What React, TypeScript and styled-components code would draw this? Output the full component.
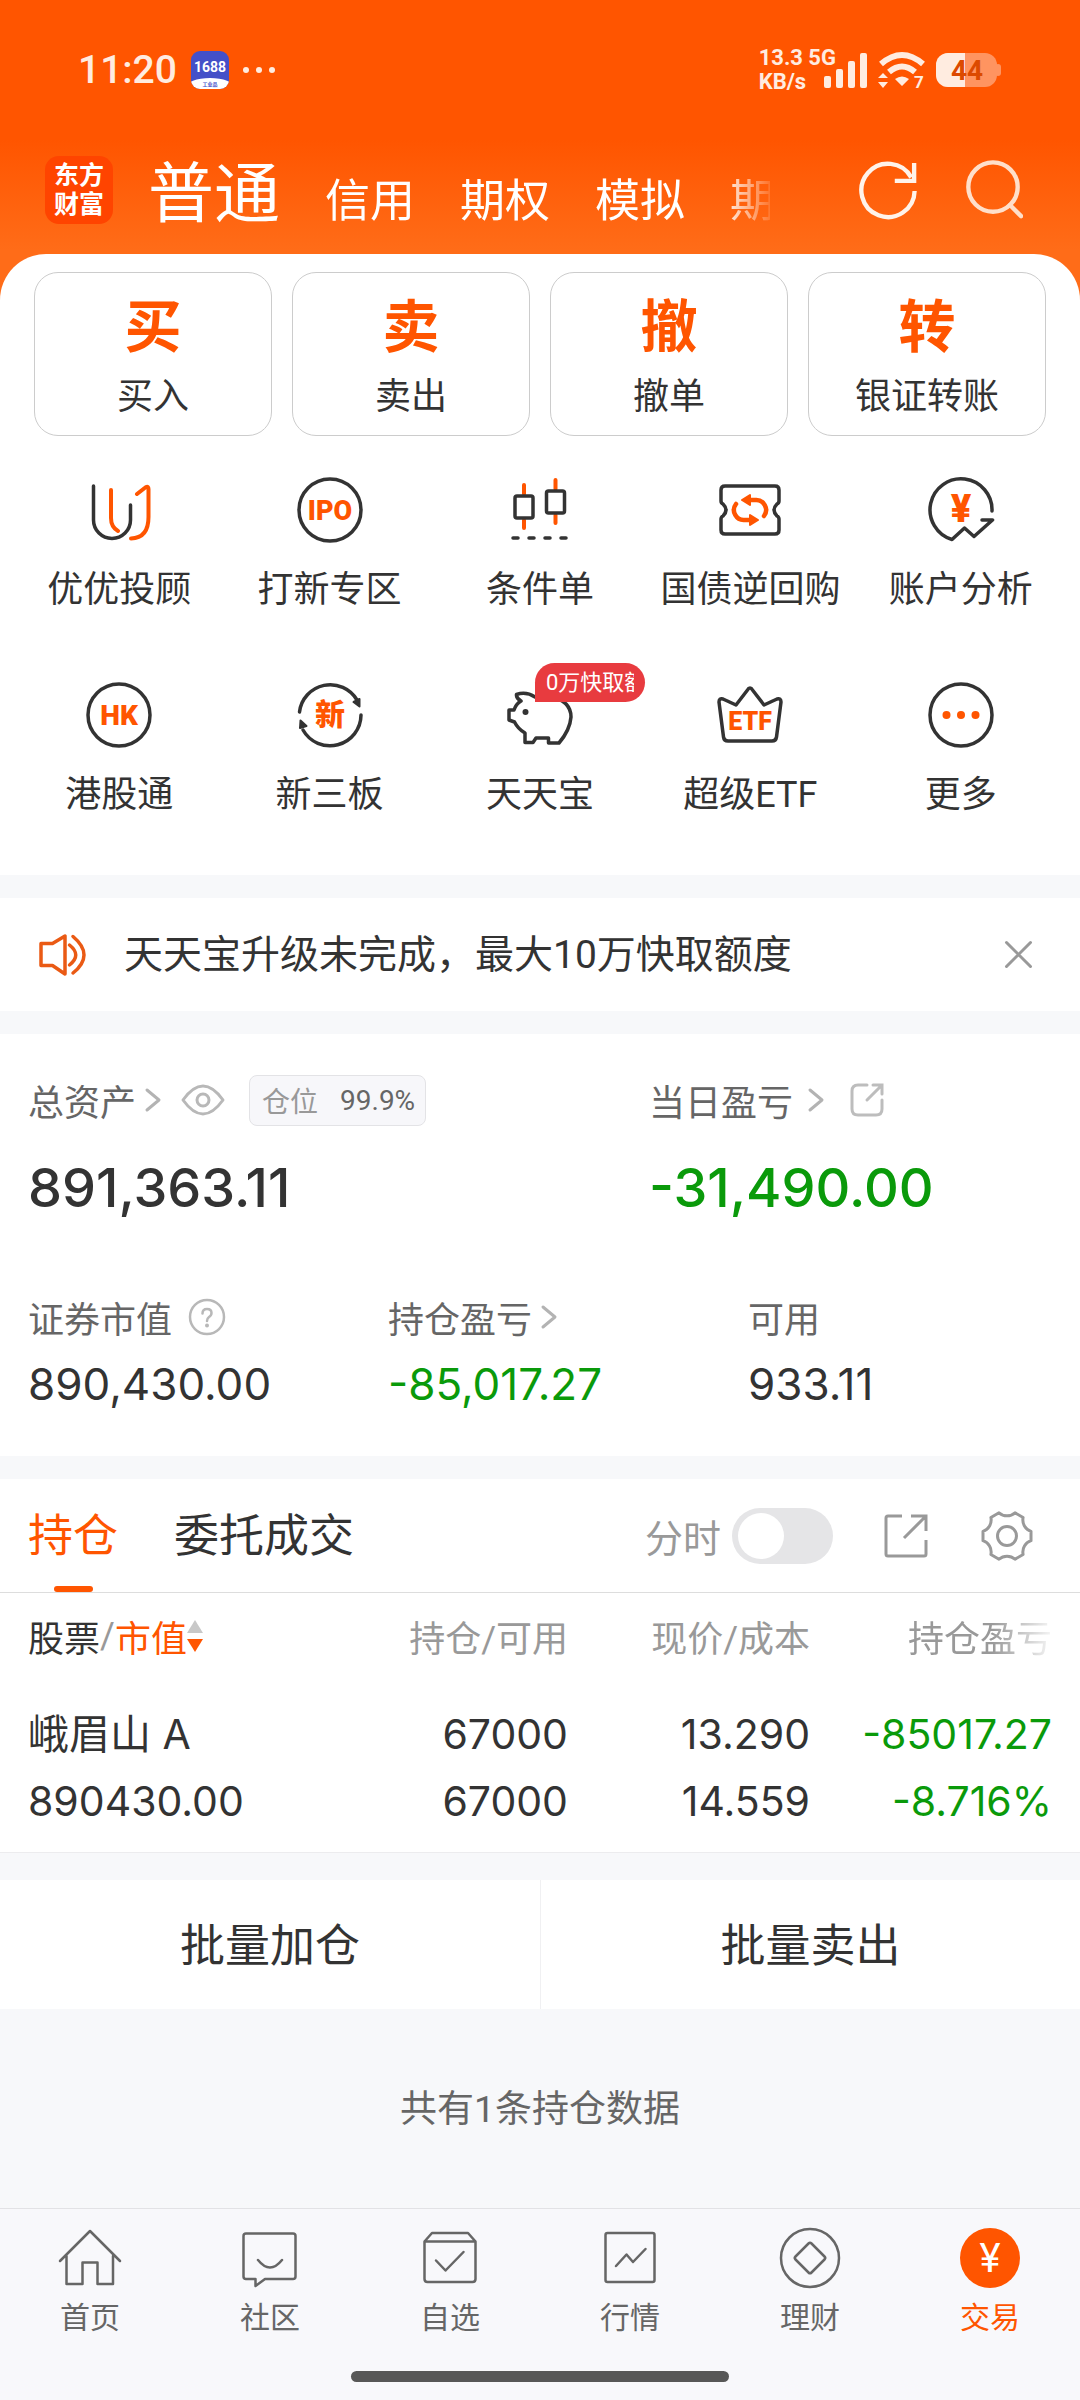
import React, { useState } from "react";
import styled, { createGlobalStyle } from "styled-components";

const ORANGE = "#ff5500";
const INK = "#333333";
const GREY = "#666666";
const LIGHT = "#999999";
const GREEN = "#0a9a0a";
const SANS = `Roboto, "Noto Sans CJK SC", sans-serif`;
const FIGURES = `Inter, "Noto Sans CJK SC", sans-serif`;

const GlobalStyle = createGlobalStyle`
  * { box-sizing: border-box; }
  body { margin: 0; background: #f7f8fa; font-family: ${SANS}; color: ${INK}; }
  button { font: inherit; color: inherit; background: none; border: 0; padding: 0; margin: 0; cursor: pointer; }
  a { color: inherit; text-decoration: none; }
  svg { display: block; flex: none; }
  h1, h2, p { margin: 0; font-weight: 400; }
`;

const Page = styled.div`
  display: flex;
  flex-direction: column;
  min-height: 100vh;
`;

/* ---------- header ---------- */

const Header = styled.header`
  padding-bottom: 60px;
  background: linear-gradient(#ff5500 0, #ff5500 140px, #ff6c18 250px, #ff6c18 100%);
  color: #fff;
`;

const StatusBar = styled.div`
  display: flex;
  align-items: center;
  height: 140px;
  padding: 0 78px;
  color: #ffece0;
`;

const Clock = styled.time`
  font: 500 39px/48px ${SANS};
`;

const StatusIcons = styled.div`
  display: flex;
  align-items: center;
  gap: 12px;
  margin-left: 14px;
`;

const StatusRight = styled.div`
  display: flex;
  align-items: center;
  gap: 10px;
  margin-left: auto;
`;

const NetSpeed = styled.div`
  font: 700 22px/24px ${SANS};
  margin-right: -22px;
  white-space: pre;
`;

const TopNav = styled.nav`
  display: flex;
  align-items: center;
  height: 100px;
  padding: 0 57px 0 45px;
`;

const Logo = styled.div`
  display: grid;
  place-content: center;
  width: 68px;
  height: 68px;
  border-radius: 14px;
  background: #ff4400;
  font: 700 25px/29px ${SANS};
  text-align: center;
`;

const AccountTabs = styled.div`
  display: flex;
  flex: 1;
  align-items: baseline;
  gap: 45px;
  margin: 0 88px 0 35px;
  padding-top: 16px;
  overflow: hidden;
  white-space: nowrap;
  mask-image: linear-gradient(to right, #000 calc(100% - 50px), transparent calc(100% + 8px));
`;

const AccountTab = styled.button<{ $active?: boolean }>`
  flex: none;
  font-size: ${(p) => (p.$active ? 66 : 45)}px;
  line-height: 90px;
`;

const TopActions = styled.div`
  display: flex;
  gap: 45px;
`;

/* ---------- shortcuts ---------- */

const Shortcuts = styled.section`
  margin-top: -46px;
  padding: 18px 0 58px;
  border-radius: 46px 46px 0 0;
  background: #fff;
`;

const TradeRow = styled.div`
  display: grid;
  grid-template-columns: repeat(4, 1fr);
  gap: 20px;
  padding: 0 34px;
`;

const TradeCard = styled.button`
  display: flex;
  flex-direction: column;
  align-items: center;
  gap: 8px;
  padding: 18px 0 14px;
  border: 1px solid #cccccc;
  border-radius: 24px;
  font-size: 36px;
  line-height: 48px;
`;

const TradeMark = styled.span`
  color: ${ORANGE};
  font-size: 57px;
  font-weight: 700;
  line-height: 74px;
`;

const ToolGrid = styled.div`
  display: grid;
  grid-template-columns: repeat(5, 1fr);
  row-gap: 67px;
  margin-top: 38px;
  padding: 0 14px;
`;

const Tool = styled.button`
  position: relative;
  display: flex;
  flex-direction: column;
  align-items: center;
  gap: 22px;
  font-size: 36px;
  line-height: 44px;
  white-space: nowrap;
`;

const Badge = styled.span`
  position: absolute;
  top: -16px;
  left: 50%;
  width: 110px;
  height: 39px;
  margin-left: -5px;
  padding: 0 11px;
  border-radius: 20px 20px 20px 0;
  background: #e83b3f;
  color: #fff;
  font-size: 22px;
  line-height: 39px;
  text-align: left;
`;

const BadgeText = styled.span`
  display: block;
  overflow: hidden;
`;

/* ---------- notice ---------- */

const Notice = styled.section`
  display: flex;
  align-items: center;
  height: 113px;
  margin-top: 23px;
  padding: 0 47px 0 38px;
  background: #fff;
`;

const NoticeText = styled.p`
  flex: 1;
  margin-left: 36px;
  font-size: 39px;
  line-height: 48px;
`;

/* ---------- assets ---------- */

const Assets = styled.section`
  margin-top: 23px;
  padding: 36px 0 37px;
  background: #fff;
`;

const AssetRow = styled.div<{ $cols: string }>`
  display: grid;
  grid-template-columns: ${(p) => p.$cols};
  & + & { margin-top: 67px; }
`;

const Asset = styled.div`
  padding-left: 28px;
`;

const AssetLabel = styled.div<{ $tall?: boolean }>`
  display: flex;
  align-items: center;
  height: ${(p) => (p.$tall ? 60 : 48)}px;
  color: ${GREY};
  font-size: 36px;
`;

const LabelLink = styled.a<{ $gap: number }>`
  display: flex;
  align-items: center;
  gap: ${(p) => p.$gap}px;
`;

const IconButton = styled.button<{ $ml?: number }>`
  margin-left: ${(p) => p.$ml ?? 0}px;
`;

const Chip = styled.span`
  display: flex;
  align-items: center;
  gap: 22px;
  height: 51px;
  margin-left: 24px;
  padding: 0 10px 0 12px;
  border: 1px solid #e3e3e6;
  border-radius: 8px;
  background: #f7f7fa;
  color: ${LIGHT};
  font-size: 28px;
  b { color: ${GREY}; font-weight: 400; }
`;

const Amount = styled.div<{ $big?: boolean; $down?: boolean }>`
  margin-top: ${(p) => (p.$big ? 20 : 8)}px;
  color: ${(p) => (p.$down ? GREEN : INK)};
  font-family: ${FIGURES};
  font-size: ${(p) => (p.$big ? 54 : 44)}px;
  font-weight: ${(p) => (p.$big ? 500 : 400)};
  line-height: ${(p) => (p.$big ? 76 : 70)}px;
`;

/* ---------- holdings ---------- */

const Holdings = styled.section`
  margin-top: 23px;
  border-bottom: 1px solid #ececee;
  background: #fff;
`;

const HoldingsBar = styled.div`
  display: flex;
  align-items: center;
  height: 114px;
  padding: 0 47px 0 28px;
  border-bottom: 1px solid #dddddd;
`;

const HoldingsTab = styled.button<{ $active?: boolean }>`
  display: flex;
  flex-direction: column;
  align-items: center;
  height: 113px;
  margin-right: 56px;
  color: ${(p) => (p.$active ? ORANGE : INK)};
  font-size: 45px;
  line-height: 115px;
  &::after {
    content: "";
    width: 39px;
    height: 6px;
    margin-top: -8px;
    border-radius: 3px;
    background: ${(p) => (p.$active ? ORANGE : "transparent")};
  }
`;

const ChartSwitch = styled.label`
  display: flex;
  align-items: center;
  gap: 11px;
  margin-left: auto;
  color: ${LIGHT};
  font-size: 38px;
`;

const Switch = styled.input`
  appearance: none;
  display: flex;
  width: 101px;
  height: 56px;
  margin: 0;
  padding: 5px 6px;
  border-radius: 28px;
  background: #e5e5e7;
  cursor: pointer;
  &::before {
    content: "";
    width: 46px;
    height: 46px;
    border-radius: 50%;
    background: #fff;
  }
  &:checked { justify-content: flex-end; background: ${ORANGE}; }
`;

const TableWrap = styled.div`
  padding: 0 28px;
`;

const Table = styled.table`
  width: 100%;
  border-collapse: collapse;
  table-layout: fixed;
`;

const Th = styled.th<{ $fade?: boolean }>`
  width: 242px;
  height: 86px;
  padding: 0;
  color: ${LIGHT};
  font-size: 36px;
  font-weight: 400;
  text-align: right;
  white-space: nowrap;
  &:first-child { width: auto; text-align: left; }
  ${(p) => p.$fade && "mask-image: linear-gradient(to right, #000 calc(100% - 60px), transparent calc(100% + 6px));"}
`;

const SortButton = styled.button`
  display: flex;
  align-items: center;
  color: ${LIGHT};
  span { color: ${INK}; }
  em { color: ${ORANGE}; font-style: normal; }
`;

const Td = styled.td<{ $down?: boolean }>`
  padding: 22px 0 17px;
  color: ${(p) => (p.$down ? GREEN : INK)};
  font-family: ${FIGURES};
  font-size: 41px;
  line-height: 67px;
  text-align: right;
  white-space: nowrap;
  &:first-child { text-align: left; }
`;

const Line = styled.div`
  height: 67px;
`;

const BatchRow = styled.div`
  display: grid;
  grid-template-columns: 1fr 1fr;
  margin-top: 27px;
  background: #fff;
`;

const BatchButton = styled.button`
  height: 129px;
  padding-bottom: 4px;
  font-size: 45px;
  & + & { border-left: 1px solid #f0f0f2; }
`;

const CountNote = styled.p`
  display: flex;
  flex: 1;
  align-items: center;
  justify-content: center;
  min-height: 120px;
  padding-bottom: 6px;
  color: ${GREY};
  font-size: 37px;
`;

/* ---------- bottom bar ---------- */

const BottomBar = styled.footer`
  border-top: 1px solid #e2e2e5;
  background: #f8f8fb;
`;

const BottomNav = styled.nav`
  display: grid;
  grid-template-columns: repeat(6, 1fr);
  padding-top: 17px;
`;

const NavItem = styled.a<{ $active?: boolean }>`
  display: flex;
  flex-direction: column;
  align-items: center;
  gap: 10px;
  color: ${(p) => (p.$active ? ORANGE : GREY)};
  font-size: 30px;
  line-height: 36px;
`;

const HomeBar = styled.div`
  width: 35%;
  height: 11px;
  margin: 35px auto 18px;
  border-radius: 6px;
  background: #575757;
`;

/* ---------- icons ---------- */

const Chevron = () => (
  <svg width="18" height="26" viewBox="0 0 18 26" fill="none" stroke="#b3b3b3" strokeWidth="3" strokeLinecap="round" strokeLinejoin="round">
    <path d="M3 3 15 13 3 23" />
  </svg>
);

const ToolIcon = ({ children }: { children: React.ReactNode }) => (
  <svg width="72" height="72" viewBox="0 0 72 72" fill="none" stroke={INK} strokeWidth="3.500" strokeLinecap="round" strokeLinejoin="round" aria-hidden="true">
    {children}
  </svg>
);

const IconWord = ({ size, y = 46, children }: { size: number; y?: number; children: string }) => (
  <text x="36" y={y} textAnchor="middle" fontFamily={SANS} fontWeight="900" fontSize={size} fill={ORANGE} stroke="none">
    {children}
  </text>
);

const advisorIcon = (
  <ToolIcon>
    <path d="M10.500 12V46A18.500 18.500 0 0 0 47.500 46V31" />
    <path stroke={ORANGE} strokeWidth="4" d="M28 16V44Q28 53 35 57M54 20 63 13Q65.500 12 65.500 15V43Q65.500 64 48 64.500" />
  </ToolIcon>
);
const ipoIcon = (
  <ToolIcon>
    <circle cx="36" cy="36" r="31" />
    <IconWord size={27}>IPO</IconWord>
  </ToolIcon>
);
const conditionIcon = (
  <ToolIcon>
    <path stroke={ORANGE} strokeWidth="4" d="M20 11V20M20 46V54M51.500 6V15M51.500 41V49" />
    <rect x="11" y="22" width="18" height="22" rx="2" />
    <rect x="42.500" y="17" width="18" height="22" rx="2" />
    <path d="M9 64H14M25 64H30M41 64H46M57 64H62" />
  </ToolIcon>
);
const repoIcon = (
  <ToolIcon>
    <path d="M11 12H61Q65 12 65 16V27Q65 29 63 30Q57 36 63 42Q65 43 65 45V56Q65 60 61 60H11Q7 60 7 56V45Q7 43 9 42Q15 36 9 30Q7 29 7 27V16Q7 12 11 12Z" />
    <g stroke={ORANGE} strokeWidth="4.500">
      <path d="M36 26H41A10 10 0 0 1 50 42M36 46H31A10 10 0 0 1 22 30" />
      <path fill={ORANGE} strokeWidth="2" d="M28 26 36 21V31ZM44 46 36 41V51Z" />
    </g>
  </ToolIcon>
);
const analysisIcon = (
  <ToolIcon>
    <path d="M67 37A31 31 0 1 0 27 65.500L39.500 54 49 62.500 67.500 46H57" />
    <IconWord size={38} y={48}>¥</IconWord>
  </ToolIcon>
);
const hkIcon = (
  <ToolIcon>
    <circle cx="36" cy="36" r="31" />
    <IconWord size={28}>HK</IconWord>
  </ToolIcon>
);
const neeqIcon = (
  <ToolIcon>
    <path d="M5.500 33A31 31 0 0 1 63 21M67 36A31 31 0 0 1 9 51" />
    <path fill={INK} strokeWidth="2" d="M65.500 27.500 59.500 23 65.500 20ZM6.500 41.500 6 49 12.500 47Z" />
    <IconWord size={30}>新</IconWord>
  </ToolIcon>
);
const piggyIcon = (
  <ToolIcon>
    <path d="M12.500 15.500Q22 12 31 18Q37 15 46 17Q67 22 67 38Q66 51 55 64H44.500V59H32L29 63.500H21V54Q14 50 10.500 43L5 41V31H10Q12 25 17 22Q12 19 12.500 15.500Z" />
    <circle cx="21.500" cy="33" r="3" fill={INK} stroke="none" />
  </ToolIcon>
);
const etfIcon = (
  <ToolIcon>
    <path d="M36 9Q37.500 9 38.500 11L50 26 63 20Q67 19 67 23L62.500 58Q62 62 58 62H14Q10 62 9.500 58L5 23Q5 19 9 20L22 26 33.500 11Q34.500 9 36 9Z" />
    <IconWord size={25} y={51}>ETF</IconWord>
  </ToolIcon>
);
const moreIcon = (
  <ToolIcon>
    <circle cx="36" cy="36" r="31" />
    <g fill={ORANGE} stroke="none">
      <circle cx="21.500" cy="36" r="4" />
      <circle cx="36" cy="36" r="4" />
      <circle cx="50.500" cy="36" r="4" />
    </g>
  </ToolIcon>
);

const NavIcon = ({ children }: { children: React.ReactNode }) => (
  <svg width="64" height="64" viewBox="0 0 64 64" fill="none" stroke="currentColor" strokeWidth="2.500" strokeLinecap="round" strokeLinejoin="round" aria-hidden="true">
    {children}
  </svg>
);

/* ---------- data ---------- */

const trades = [
  ["买", "买入"],
  ["卖", "卖出"],
  ["撤", "撤单"],
  ["转", "银证转账"],
];

const tools: { name: string; icon: React.ReactNode; badge?: string }[] = [
  { name: "优优投顾", icon: advisorIcon },
  { name: "打新专区", icon: ipoIcon },
  { name: "条件单", icon: conditionIcon },
  { name: "国债逆回购", icon: repoIcon },
  { name: "账户分析", icon: analysisIcon },
  { name: "港股通", icon: hkIcon },
  { name: "新三板", icon: neeqIcon },
  { name: "天天宝", icon: piggyIcon, badge: "0万快取额" },
  { name: "超级ETF", icon: etfIcon },
  { name: "更多", icon: moreIcon },
];

const navItems = [
  { name: "首页", icon: <NavIcon><path d="M2 35 32 5 62 35M8.500 30V58H24.500V36.500H39.500V58H55V30" /></NavIcon> },
  { name: "社区", icon: <NavIcon><path d="M8 7.500H55Q57.500 7.500 57.500 10V50.500Q57.500 53 55 53H27L17.500 60V53H8Q5.500 53 5.500 50.500V10Q5.500 7.500 8 7.500ZM20 34Q32 49 44 34" /></NavIcon> },
  { name: "自选", icon: <NavIcon><path d="M6.500 15.500 14 7H50L57.500 15.500V53Q57.500 56 54.500 56H9.500Q6.500 56 6.500 53ZM6.500 15.500H57.500M18 34.500 27.500 44.500 45.500 26" /></NavIcon> },
  { name: "行情", icon: <NavIcon><rect x="7.500" y="7" width="49" height="49" rx="2" /><path d="M18 40 28.500 28.500 35 36 47.500 23" /></NavIcon> },
  { name: "理财", icon: <NavIcon><circle cx="32" cy="32" r="29" /><path d="M30.500 17.500Q32 16 33.500 17.500L46.500 30.500Q48 32 46.500 33.500L33.500 46.500Q32 48 30.500 46.500L17.500 33.500Q16 32 17.500 30.500Z" /></NavIcon> },
  {
    name: "交易",
    icon: (
      <NavIcon>
        <circle cx="32" cy="32" r="30" fill={ORANGE} stroke="none" />
        <text x="32" y="46" textAnchor="middle" fontFamily={SANS} fontWeight="400" fontSize="40" fill="#fff" stroke="none">¥</text>
      </NavIcon>
    ),
  },
];

export default function App() {
  const [minuteChart, setMinuteChart] = useState(false);

  return (
    <Page>
      <GlobalStyle />
      <Header>
        <StatusBar>
          <Clock>11:20</Clock>
          <StatusIcons>
            <svg width="38" height="38" viewBox="0 0 38 38">
              <defs><clipPath id="tile"><rect width="38" height="38" rx="9" /></clipPath></defs>
              <g clipPath="url(#tile)">
                <rect width="38" height="38" fill="#4450c8" />
                <ellipse cx="19" cy="36" rx="24" ry="9" fill="#fff" />
              </g>
              <text x="19" y="21" textAnchor="middle" fontFamily={SANS} fontWeight="700" fontSize="14" fill="#fff">1688</text>
              <text x="19" y="35" textAnchor="middle" fontFamily={SANS} fontWeight="700" fontSize="5" fill="#4450c8">工业品</text>
            </svg>
            <svg width="36" height="10" viewBox="0 0 36 10" fill="currentColor">
              <circle cx="5" cy="5" r="3" /><circle cx="18" cy="5" r="3" /><circle cx="31" cy="5" r="3" />
            </svg>
          </StatusIcons>
          <StatusRight>
            <NetSpeed>{"13.3 5G\nKB/s"}</NetSpeed>
            <svg width="44" height="36" viewBox="0 0 44 36" fill="currentColor">
              <rect x="0" y="24" width="7" height="12" rx="2" />
              <rect x="12" y="17" width="7" height="19" rx="2" />
              <rect x="24" y="9" width="7" height="27" rx="2" />
              <rect x="36" y="1" width="7" height="35" rx="2" />
            </svg>
            <svg width="48" height="44" viewBox="0 -4 48 44" fill="none" stroke="currentColor" strokeWidth="6">
              <path d="M3 12Q24-6 45 12M11 20Q24 9 37 20" />
              <path stroke="none" fill="currentColor" d="M17 27Q24 22 31 27L24 34ZM5 21 10 26H0ZM5 36 0 30H10Z" />
              <text x="36" y="36" fontFamily={SANS} fontWeight="700" fontSize="17" fill="currentColor" stroke="none">7</text>
            </svg>
            <svg width="66" height="36" viewBox="0 0 66 36">
              <defs><clipPath id="charge"><rect width="29" height="36" /></clipPath></defs>
              <rect y="1" width="61" height="34" rx="12" fill="#ff9460" />
              <rect x="59" y="12" width="6" height="12" rx="3" fill="#ff9460" />
              <rect y="1" width="61" height="34" rx="12" fill="currentColor" clipPath="url(#charge)" />
              <text x="31" y="28" textAnchor="middle" fontFamily={SANS} fontWeight="700" fontSize="28" fill="#dc4a00">44</text>
            </svg>
          </StatusRight>
        </StatusBar>
        <TopNav>
          <Logo>东方<br />财富</Logo>
          <AccountTabs>
            <AccountTab $active>普通</AccountTab>
            <AccountTab>信用</AccountTab>
            <AccountTab>期权</AccountTab>
            <AccountTab>模拟</AccountTab>
            <AccountTab>期</AccountTab>
          </AccountTabs>
          <TopActions>
            <IconButton aria-label="刷新">
              <svg width="60" height="60" viewBox="0 0 62 62" fill="none" stroke="#fff3ea" strokeWidth="4.500">
                <path d="M58.500 32A27.500 27.500 0 1 1 55 18M58 3V21.500H38" />
              </svg>
            </IconButton>
            <IconButton aria-label="搜索">
              <svg width="60" height="60" viewBox="0 0 62 62" fill="none" stroke="#ffdfca" strokeWidth="4.500" strokeLinecap="round">
                <circle cx="31" cy="28" r="25.500" />
                <path d="M48.500 46.500 60 58" />
              </svg>
            </IconButton>
          </TopActions>
        </TopNav>
      </Header>

      <Shortcuts>
        <TradeRow>
          {trades.map(([mark, name]) => (
            <TradeCard key={name}>
              <TradeMark>{mark}</TradeMark>
              {name}
            </TradeCard>
          ))}
        </TradeRow>
        <ToolGrid>
          {tools.map((t) => (
            <Tool key={t.name}>
              {t.icon}
              {t.name}
              {t.badge && <Badge><BadgeText>{t.badge}</BadgeText></Badge>}
            </Tool>
          ))}
        </ToolGrid>
      </Shortcuts>

      <Notice>
        <svg width="50" height="48" viewBox="0 0 50 48" fill="none" stroke="#ea5a14" strokeWidth="3.500" strokeLinecap="round" strokeLinejoin="round">
          <path d="M3 12.500H14.500L27 5V43L14.500 34.500H3ZM31.500 14Q44 24 31.500 34M35 5.500Q57 24 35 42" />
        </svg>
        <NoticeText>天天宝升级未完成，最大10万快取额度</NoticeText>
        <IconButton aria-label="关闭">
          <svg width="29" height="29" viewBox="0 0 29 29" fill="none" stroke="#999" strokeWidth="3" strokeLinecap="round">
            <path d="M2.500 2.500 26.500 26.500M26.500 2.500 2.500 26.500" />
          </svg>
        </IconButton>
      </Notice>

      <Assets>
        <AssetRow $cols="23fr 17fr">
          <Asset>
            <AssetLabel $tall>
              <LabelLink href="#assets" $gap={8}>总资产<Chevron /></LabelLink>
              <IconButton aria-label="显示金额" $ml={19}>
                <svg width="44" height="32" viewBox="0 0 44 32" fill="none" stroke="#b8b8b8" strokeWidth="3">
                  <path d="M2 16Q22-12 42 16Q22 44 2 16Z" strokeLinejoin="round" />
                  <circle cx="22" cy="16" r="6" />
                </svg>
              </IconButton>
              <Chip>仓位<b>99.9%</b></Chip>
            </AssetLabel>
            <Amount $big>891,363.11</Amount>
          </Asset>
          <Asset>
            <AssetLabel $tall>
              <LabelLink href="#today" $gap={14}>当日盈亏<Chevron /></LabelLink>
              <IconButton aria-label="分享当日盈亏" $ml={25}>
                <svg width="34" height="34" viewBox="0 0 34 34" fill="none" stroke="#bdbdbd" strokeWidth="3" strokeLinecap="round">
                  <path d="M17 2H8Q2 2 2 8V26Q2 32 8 32H26Q32 32 32 26V17M17 17 31 3M23 2H32V11" />
                </svg>
              </IconButton>
            </AssetLabel>
            <Amount $big $down>-31,490.00</Amount>
          </Asset>
        </AssetRow>
        <AssetRow $cols="repeat(3, 1fr)">
          <Asset>
            <AssetLabel>
              证券市值
              <IconButton aria-label="说明" $ml={16}>
                <svg width="38" height="38" viewBox="0 0 38 38" fill="none" stroke="#b8b8b8" strokeWidth="2.500">
                  <circle cx="19" cy="19" r="17" />
                  <path d="M14.500 15.500Q14.500 11 19 11Q23.500 11 23.500 15Q23.500 17.500 21 19Q19 20.500 19 23" strokeLinecap="round" />
                  <circle cx="19" cy="27.500" r="2" fill="#b8b8b8" stroke="none" />
                </svg>
              </IconButton>
            </AssetLabel>
            <Amount>890,430.00</Amount>
          </Asset>
          <Asset>
            <AssetLabel>
              <LabelLink href="#profit" $gap={8}>持仓盈亏<Chevron /></LabelLink>
            </AssetLabel>
            <Amount $down>-85,017.27</Amount>
          </Asset>
          <Asset>
            <AssetLabel>可用</AssetLabel>
            <Amount>933.11</Amount>
          </Asset>
        </AssetRow>
      </Assets>

      <Holdings>
        <HoldingsBar>
          <HoldingsTab $active>持仓</HoldingsTab>
          <HoldingsTab>委托成交</HoldingsTab>
          <ChartSwitch htmlFor="minute-chart">
            分时
            <Switch id="minute-chart" type="checkbox" checked={minuteChart} onChange={(e) => setMinuteChart(e.target.checked)} />
          </ChartSwitch>
          <IconButton aria-label="分享持仓" $ml={51}>
            <svg width="44" height="44" viewBox="0 0 44 44" fill="none" stroke="#999" strokeWidth="3">
              <path d="M18 2H4Q2 2 2 4V40Q2 42 4 42H40Q42 42 42 40V26M20 24 41 3M27 2H42V17" />
            </svg>
          </IconButton>
          <IconButton aria-label="设置" $ml={53}>
            <svg width="52" height="52" viewBox="-26 -26 52 52" fill="none" stroke="#999" strokeWidth="3" strokeLinejoin="round">
              <path d="M24-4.700V4.700A12 12 0 0 0 16.100 18.500L8 23.200A12 12 0 0 0-8 23.200L-16.100 18.500A12 12 0 0 0-24 4.700V-4.700A12 12 0 0 0-16.100-18.500L-8-23.200A12 12 0 0 0 8-23.200L16.100-18.500A12 12 0 0 0 24-4.700Z" />
              <circle r="9.500" />
            </svg>
          </IconButton>
        </HoldingsBar>
        <TableWrap>
          <Table>
            <thead>
              <tr>
                <Th>
                  <SortButton>
                    <span>股票</span>/<em>市值</em>
                    <svg width="16" height="34" viewBox="0 0 16 34">
                      <path d="M8 1 16 14H0Z" fill="#c8c8c8" />
                      <path d="M8 33 0 20H16Z" fill={ORANGE} />
                    </svg>
                  </SortButton>
                </Th>
                <Th>持仓/可用</Th>
                <Th>现价/成本</Th>
                <Th $fade>持仓盈亏</Th>
              </tr>
            </thead>
            <tbody>
              <tr>
                <Td><Line>峨眉山 A</Line><Line>890430.00</Line></Td>
                <Td><Line>67000</Line><Line>67000</Line></Td>
                <Td><Line>13.290</Line><Line>14.559</Line></Td>
                <Td $down><Line>-85017.27</Line><Line>-8.716%</Line></Td>
              </tr>
            </tbody>
          </Table>
        </TableWrap>
      </Holdings>

      <BatchRow>
        <BatchButton>批量加仓</BatchButton>
        <BatchButton>批量卖出</BatchButton>
      </BatchRow>

      <CountNote>共有1条持仓数据</CountNote>

      <BottomBar>
        <BottomNav>
          {navItems.map((n) => (
            <NavItem key={n.name} href={`#${n.name}`} $active={n.name === "交易"}>
              {n.icon}
              {n.name}
            </NavItem>
          ))}
        </BottomNav>
        <HomeBar />
      </BottomBar>
    </Page>
  );
}
